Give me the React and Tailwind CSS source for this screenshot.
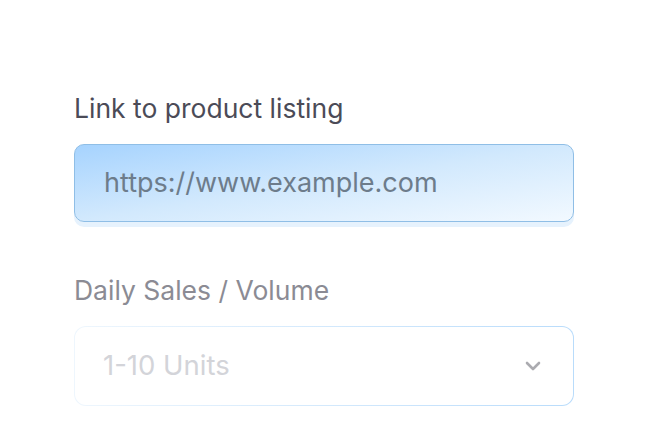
import { ChevronDown } from 'lucide-react';

export default function App() {
  return (
    <div className="min-h-screen bg-white" style={{ fontFamily: 'Inter, "Noto Sans", sans-serif' }}>
      <div className="pl-[74px] pt-[90px] w-[574px]">
        <label className="block text-[26.5px] leading-[36px] text-[#4b4b57]">
          Link to product listing
        </label>
        <div className="mt-[18px] h-[78px] rounded-[10px] border-[1.5px] border-[#8fbee6] bg-gradient-to-br from-[#a6d3fe] via-[#d2e9fd] to-[#f2f9ff] shadow-[0_5px_0_0_#e6f2fd] flex items-center px-[29px]">
          <span className="text-[27px] text-[#6d7c8b]">https://www.example.com</span>
        </div>
        <label className="block mt-[50px] text-[26.5px] leading-[36px] text-[#8b8b94]">
          Daily Sales / Volume
        </label>
        <div className="mt-[18px] h-[80px] rounded-[12px] p-px bg-gradient-to-r from-[#eef6fd] to-[#b9dcfb]">
          <div className="h-full rounded-[11px] bg-white flex items-center justify-between pl-[28px] pr-[28px]">
            <span className="text-[27.5px] text-[#d3d4d9]">1-10 Units</span>
            <ChevronDown className="w-[24px] h-[24px] text-[#ababb0]" strokeWidth={2.6} />
          </div>
        </div>
      </div>
    </div>
  );
}
